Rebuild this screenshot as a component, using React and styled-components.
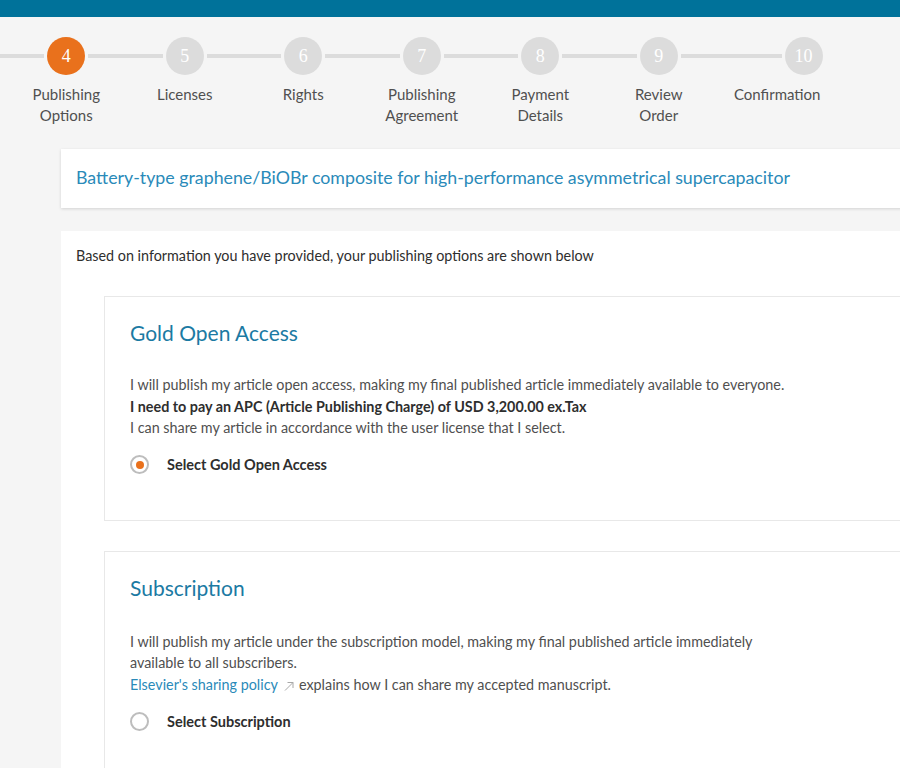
import React from "react";
import styled, { createGlobalStyle } from "styled-components";

const GlobalStyle = createGlobalStyle`
  html, body {
    margin: 0;
    padding: 0;
    background: #f5f5f5;
    overflow: hidden;
  }
  body {
    font-family: Lato, "Open Sans", sans-serif;
    color: #2e2e2e;
  }
`;

const steps = [
  { n: 4, label: ["Publishing", "Options"], active: true },
  { n: 5, label: ["Licenses"] },
  { n: 6, label: ["Rights"] },
  { n: 7, label: ["Publishing", "Agreement"] },
  { n: 8, label: ["Payment", "Details"] },
  { n: 9, label: ["Review", "Order"] },
  { n: 10, label: ["Confirmation"], last: true },
];

const TopBar = styled.div`
  height: 17px;
  background: #00729a;
`;

const Stepper = styled.ol`
  display: flex;
  list-style: none;
  margin: 0;
  padding: 20px 0 0 0;
`;

const Lead = styled.li`
  flex: 0 0 7px;
  height: 4px;
  margin-top: 17px;
  background: #dcdcdc;
`;

const Step = styled.li`
  flex: 0 0 118.5px;
  display: flex;
  flex-direction: column;
`;

const CircleRow = styled.div`
  display: flex;
  align-items: center;
  height: 38px;
  gap: 3px;
`;

const Line = styled.span`
  flex: ${({ $fixed }) => ($fixed ? "0 0 11px" : "1")};
  height: 4px;
  background: ${({ $hidden }) => ($hidden ? "transparent" : "#dcdcdc")};
`;

const Circle = styled.span`
  flex: 0 0 38px;
  height: 38px;
  border-radius: 50%;
  background: ${({ $active }) => ($active ? "#e9711c" : "#dcdcdc")};
  color: #fff;
  display: flex;
  align-items: center;
  justify-content: center;
  font-family: "Liberation Serif", serif;
  font-size: 18px;
`;

const StepLabel = styled.div`
  margin-top: 9px;
  text-align: center;
  font-size: 15px;
  line-height: 21px;
  color: #505050;
  white-space: nowrap;
`;

const Content = styled.main`
  margin: 23px 0 0 61px;
  width: 900px;
`;

const TitleCard = styled.section`
  height: 59px;
  padding: 0 15px 4px;
  box-sizing: border-box;
  display: flex;
  align-items: center;
  background: #fff;
  box-shadow: 0 1px 3px rgba(0, 0, 0, 0.14);
`;

const ArticleTitle = styled.h1`
  margin: 0;
  font-size: 17.8px;
  line-height: 24px;
  font-weight: 400;
  color: #2a8ab9;
`;

const MainCard = styled.section`
  margin-top: 23px;
  padding: 14px 15px 40px;
  background: #fff;
`;

const Intro = styled.p`
  margin: 0;
  font-size: 14.35px;
  line-height: 21px;
`;

const Option = styled.div`
  margin: 30px 0 0 28px;
  padding: 22px 25px ${({ $bottom }) => $bottom}px;
  border: 1px solid #e8e8e8;
`;

const OptionTitle = styled.h2`
  margin: 0;
  font-size: 21px;
  line-height: 28px;
  font-weight: 400;
  color: #1b7aa3;
`;

const OptionText = styled.div`
  margin-top: ${({ $gap }) => $gap}px;
  max-width: 670px;
  font-size: 14.35px;
  line-height: 21.5px;
  color: #505050;

  p {
    margin: 0;
  }
  strong {
    color: #2e2e2e;
    font-weight: 700;
  }
`;

const Link = styled.a`
  color: #2a8ab9;
  text-decoration: none;
`;

const ExtIcon = styled.svg`
  width: 10px;
  height: 10px;
  margin: 0 5px 0 6px;
  vertical-align: -1px;
`;

const RadioRow = styled.label`
  margin-top: 15px;
  display: flex;
  align-items: center;
  height: 22px;
  gap: 18px;
  font-size: 14.5px;
  font-weight: 700;
  color: #2e2e2e;
  cursor: pointer;
`;

const Radio = styled.span`
  width: 15px;
  height: 15px;
  border: 2px solid #bdbdbd;
  border-radius: 50%;
  display: flex;
  align-items: center;
  justify-content: center;

  &::after {
    content: "";
    width: 8px;
    height: 8px;
    border-radius: 50%;
    background: ${({ $checked }) => ($checked ? "#e9711c" : "transparent")};
  }
`;

function ExternalLink() {
  return (
    <ExtIcon viewBox="0 0 10 10" fill="none" stroke="#a8a8a8" strokeWidth="1">
      <path d="M1 9.5 L9 1.5 M3.5 1.5 H9 V7" />
    </ExtIcon>
  );
}

export default function App() {
  return (
    <>
      <GlobalStyle />
      <TopBar />
      <Stepper>
        <Lead />
        {steps.map((s) => (
          <Step key={s.n}>
            <CircleRow>
              <Line />
              <Circle $active={s.active}>{s.n}</Circle>
              <Line $hidden={s.last} $fixed={s.last} />
            </CircleRow>
            <StepLabel>
              {s.label.map((l) => (
                <div key={l}>{l}</div>
              ))}
            </StepLabel>
          </Step>
        ))}
      </Stepper>

      <Content>
        <TitleCard>
          <ArticleTitle>
            Battery-type graphene/BiOBr composite for high-performance asymmetrical supercapacitor
          </ArticleTitle>
        </TitleCard>

        <MainCard>
          <Intro>
            Based on information you have provided, your publishing options are shown below
          </Intro>

          <Option $bottom={44}>
            <OptionTitle>Gold Open Access</OptionTitle>
            <OptionText $gap={27}>
              <p>
                I will publish my article open access, making my final published article immediately available to everyone.
              </p>
              <p>
                <strong>I need to pay an APC (Article Publishing Charge) of USD 3,200.00 ex.Tax</strong>
              </p>
              <p>I can share my article in accordance with the user license that I select.</p>
            </OptionText>
            <RadioRow>
              <Radio $checked />
              Select Gold Open Access
            </RadioRow>
          </Option>

          <Option $bottom={44}>
            <OptionTitle>Subscription</OptionTitle>
            <OptionText $gap={29}>
              <p>
                I will publish my article under the subscription model, making my final published article immediately available to all subscribers.
              </p>
              <p>
                <Link href="#">Elsevier's sharing policy</Link>
                <ExternalLink />
                explains how I can share my accepted manuscript.
              </p>
            </OptionText>
            <RadioRow>
              <Radio />
              Select Subscription
            </RadioRow>
          </Option>
        </MainCard>
      </Content>
    </>
  );
}
